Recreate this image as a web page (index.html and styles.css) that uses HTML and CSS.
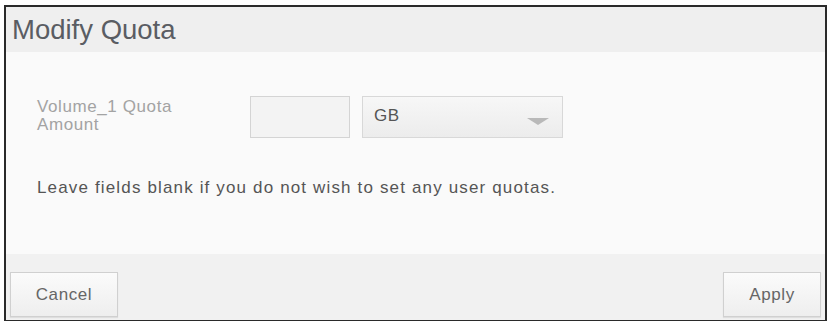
FILE: index.html
```html
<!DOCTYPE html>
<html>
<head>
<meta charset="utf-8">
<link rel="stylesheet" href="styles.css">
</head>
<body>
<div class="dialog">
  <div class="header"><h1 class="title">Modify Quota</h1></div>
  <div class="content">
    <div class="row">
      <div class="label">Volume_1 Quota<br>Amount</div>
      <div class="amount"></div>
      <div class="select"><span>GB</span><span class="arrow"></span></div>
    </div>
    <p class="note">Leave fields blank if you do not wish to set any user quotas.</p>
  </div>
  <div class="footer">
    <button class="btn cancel">Cancel</button>
    <button class="btn apply">Apply</button>
  </div>
</div>
</body>
</html>
```
FILE: styles.css
```css
html, body { margin: 0; padding: 0; background: #ffffff; }
body { width: 829px; height: 323px; overflow: hidden; font-family: "Liberation Sans", Arial, sans-serif; }
.dialog {
  margin: 5px 2px 0 4px;
  width: 819px;
  height: 313px;
  border: 2px solid #2a2a2a;
  border-bottom-width: 1px;
  display: flex;
  flex-direction: column;
  background: #fafafa;
}
.header { height: 45px; background: #efefef; display: flex; align-items: center; padding-left: 6px; }
.title { margin: 0; font-weight: normal; font-size: 27.5px; color: #5a5d63; }
.content { flex: 1; padding: 44px 0 0 31px; background: #fafafa; }
.row { display: flex; align-items: flex-start; }
.label { width: 213px; color: #a3a3a3; font-size: 17px; line-height: 18px; padding-top: 2px; letter-spacing: 0.6px; }
.amount { width: 98px; height: 40px; border: 1px solid #d4d4d4; background: #f3f3f3; }
.select {
  margin-left: 12px; width: 201px; border: 1px solid #d8d8d8;
  background: linear-gradient(#f7f7f7, #ececec);
  display: flex; align-items: center; justify-content: space-between; padding: 0 12px 0 11px; box-sizing: border-box;
  height: 42px; color: #555; font-size: 17px; letter-spacing: 0.5px;
}
.select span:first-child { margin-top: -2px; }
.arrow { width: 0; height: 0; border-left: 11px solid transparent; border-right: 11px solid transparent; border-top: 7px solid #b9b9b9; margin-top: 8px; margin-right: 1px; }
.note { margin: 40px 0 0; font-size: 17px; color: #555; letter-spacing: 1.15px; }
.footer { height: 63px; background: #f1f1f1; display: flex; justify-content: space-between; align-items: flex-end; padding: 0 4px 3px 4px; }
.btn {
  height: 45px; border: 1px solid #d0d0d0; background: linear-gradient(#fbfbfb, #eeeeee);
  font-family: "Liberation Sans", Arial, sans-serif; font-size: 17px; color: #666; padding: 0; letter-spacing: 0.6px;
  box-shadow: 0 1px 1px rgba(0,0,0,0.08);
}
.cancel { width: 108px; }
.apply { width: 98px; }
```
